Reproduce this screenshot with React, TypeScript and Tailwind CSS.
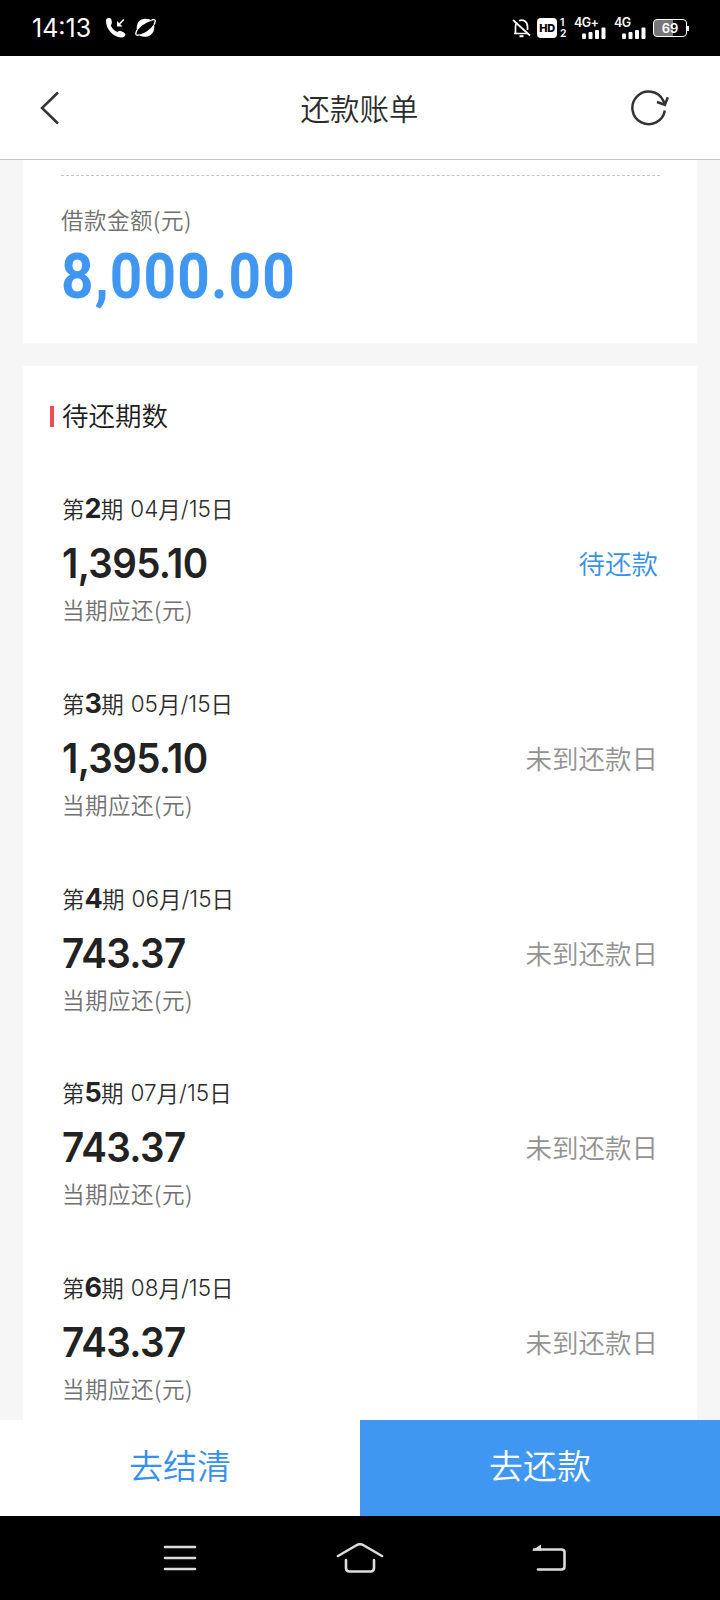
const CJK = "font-['Noto_Sans_CJK_SC',sans-serif]";

const periods = [
  { no: '2', date: ['04', '15'], amount: '1,395.10', status: '待还款', due: true },
  { no: '3', date: ['05', '15'], amount: '1,395.10', status: '未到还款日', due: false },
  { no: '4', date: ['06', '15'], amount: '743.37', status: '未到还款日', due: false },
  { no: '5', date: ['07', '15'], amount: '743.37', status: '未到还款日', due: false },
  { no: '6', date: ['08', '15'], amount: '743.37', status: '未到还款日', due: false },
];

function SignalBars() {
  return (
    <svg width="24" height="12" viewBox="0 0 24 12" fill="#fff">
      <rect x="0" y="6.5" width="4" height="5.5" rx="1" />
      <rect x="6.5" y="5" width="4" height="7" rx="1" />
      <rect x="13" y="3" width="4" height="9" rx="1" />
      <rect x="19.5" y="0.5" width="4" height="11.5" rx="1" />
    </svg>
  );
}

function StatusBar() {
  return (
    <div className="flex h-14 shrink-0 items-center bg-black pl-8 pr-[31px] font-['Inter',sans-serif] text-white">
      <span className="w-[60px] whitespace-nowrap text-[25px] leading-none">14:13</span>
      <svg className="ml-[13px]" width="22" height="22" viewBox="0 0 22 22" fill="none">
        <path
          d="M1 4C1 1.5 2.500 .5 4.500 1C6.500 1.500 7.500 5 6.500 7L5.800 8.500C7 11.500 9.500 14.200 12.500 15L14 14C16 13.500 20 15.500 20.500 17.500C20.500 19 18.500 20.800 16 20.500C8 20 1 12 1 4Z"
          fill="#fff"
        />
        <path d="M18.800 2.500L14 7.500" stroke="#fff" strokeWidth="1.6" />
        <path d="M12 4V9.500H17.500Z" fill="#fff" />
      </svg>
      <svg className="ml-2" width="22" height="20" viewBox="0 0 22 20">
        <path d="M2 13C.5 5 5 .8 10.500 .8C13 .8 15.500 1.500 17.500 3C12 3.500 6 7.500 2 13Z" fill="#fff" />
        <path d="M3.500 16.800C9 16 15.500 11.500 19 6C20.500 13 16.500 18.800 10.500 18.800C8 18.800 5.500 18.300 3.500 16.800Z" fill="#fff" />
        <path
          d="M16.500 2.200C18.500 1.200 20.500 1.300 20.200 3.300C20 4.500 19.700 5.500 19 6.500M2 12C1 14 .6 15.500 1 16.500C1.500 17.500 3 17.300 4.500 16.600"
          fill="none"
          stroke="#fff"
          strokeWidth="1.4"
        />
      </svg>

      <div className="ml-auto flex items-center">
        <svg width="20" height="20" viewBox="0 0 20 20" fill="none" stroke="#fff" strokeWidth="1.700">
          <path d="M2 15.500H15M3.500 15V8.500C3.500 7 4 5.500 5 4.500M7 2.800C11 .8 15.500 3.500 15.500 8.500V12" />
          <path d="M1 2L18 17.500" />
          <path d="M7.500 18.200H11.500" strokeWidth="2" />
        </svg>
        <span className="ml-[5px] flex h-5 w-5 items-center justify-center rounded-[4px] bg-white text-[11px] font-extrabold leading-none tracking-[-0.4px] text-black">
          HD
        </span>
        <span className="ml-[3px] flex w-[7px] flex-col text-[10.500px] font-semibold leading-[11px]">
          <span>1</span>
          <span>2</span>
        </span>
        <div className="ml-[7px] flex h-5 w-8 flex-col">
          <span className="h-[9px] text-[12.500px] font-semibold leading-[9px] tracking-[-0.6px]">4G+</span>
          <span className="self-end"><SignalBars /></span>
        </div>
        <div className="ml-2 flex h-5 w-8 flex-col">
          <span className="h-[9px] text-[12.500px] font-semibold leading-[9px] tracking-[-0.6px]">4G</span>
          <span className="self-end"><SignalBars /></span>
        </div>
        <div className="ml-[7px] flex items-center">
          <span className="flex h-[18px] w-[34px] items-center justify-center rounded-[4px] border-[1.500px] border-white bg-linear-to-r from-[#777] from-60% to-black to-60% text-[13px] font-semibold leading-none">
            69
          </span>
          <span className="h-[5px] w-0.5 bg-white" />
        </div>
      </div>
    </div>
  );
}

function Header() {
  return (
    <header className="flex h-[104px] shrink-0 items-center justify-between border-b border-[#c8c8c8] bg-white pl-10 pr-[50px]">
      <svg width="20" height="34" viewBox="0 0 20 34" fill="none" stroke="#333" strokeWidth="2.500">
        <path d="M18 1.500L2 17L18 32.500" />
      </svg>
      <h1 className="ml-[29px] text-[29.500px] font-[350] leading-none text-[#2b2b2b]">还款账单</h1>
      <svg width="40" height="38" viewBox="0 0 40 38" fill="none" stroke="#333" strokeWidth="2.500">
        <path d="M34.800 21.500A16.300 16.300 0 1 1 33.200 11.500L34.800 15.500" />
        <path d="M27 13L34.900 15.800L37.800 8.300" />
      </svg>
    </header>
  );
}

function PeriodRow({ period }: { period: (typeof periods)[number] }) {
  return (
    <li className="flex h-[194.800px] items-start justify-between pl-[39px] pr-[39px]">
      <div>
        <p className="flex h-[30px] items-center whitespace-pre text-[22.500px] font-[350] leading-[30px] text-[#2b2b2b]">
          <span className="-mt-0.5">第</span>
          <b className="font-['Inter',sans-serif] text-[27px] font-bold tracking-[-0.8px] text-[#222]">{period.no}</b>
          <span className="-mt-0.5">期</span>
          <span className="ml-[7px] font-['Inter',sans-serif]">{period.date[0]}</span>
          <span className="-mt-0.5">月</span>
          <span className="font-['Inter',sans-serif]">/{period.date[1]}</span>
          <span className="-mt-0.5">日</span>
        </p>
        <p className="mt-[15px] h-[48px] origin-left scale-x-[0.94] font-['Inter',sans-serif] text-[41px] font-semibold leading-[48px] tracking-[-0.7px] text-[#222]">
          {period.amount}
        </p>
        <p className="mt-[7px] text-[22.500px] font-[350] leading-[30px] tracking-[0.5px] text-[#707070]">当期应还(元)</p>
      </div>
      <span
        className={`mt-[54px] text-[26.500px] font-[350] leading-[30px] ${period.due ? 'text-[#3a90e6]' : 'text-[#929292]'}`}
      >
        {period.status}
      </span>
    </li>
  );
}

export default function App() {
  return (
    <div className={`flex h-[1600px] w-[720px] flex-col overflow-hidden bg-[#f6f6f6] ${CJK}`}>
      <StatusBar />
      <Header />

      <main className="min-h-0 flex-1 overflow-hidden pl-[23px] pr-[23px]">
        <section className="h-[183px] bg-white pl-[38px] pr-[37px] pt-[15px]">
          <div className="border-t border-dashed border-[#c4c4c4]" />
          <p className="mt-[28px] text-[22.500px] font-[350] leading-[30px] tracking-[0.5px] text-[#707070]">借款金额(元)</p>
          <p className="mt-[11px] origin-left scale-x-90 font-['Roboto',sans-serif] text-[63px] font-bold leading-[64px] tracking-[1.300px] text-[#3f97f2]">
            8,000.00
          </p>
        </section>

        <section className="mt-[23px] h-[1100px] bg-white pt-[35px]">
          <h2 className="flex h-[30px] items-center pl-[27px] text-[26.500px] font-[350] leading-[30px] text-[#1c1c1c]">
            <span className="mr-[8px] h-[21px] w-1 bg-[#f04a55]" />
            <span className="-mt-0.5">待还期数</span>
          </h2>
          <ul className="pt-[63px]">
            {periods.map((period) => (
              <PeriodRow key={period.no} period={period} />
            ))}
          </ul>
        </section>
      </main>

      <footer className="flex h-24 shrink-0 text-[34px] font-[350]">
        <button className="flex-1 bg-white pb-2 text-[#3890ee]">去结清</button>
        <button className="flex-1 bg-[#3f97f2] pb-2 text-white">去还款</button>
      </footer>

      <nav className="flex h-[84px] shrink-0 items-center justify-between bg-black pl-[163px] pr-[153px]">
        <svg width="34" height="28" viewBox="0 0 34 28" stroke="#ddd" strokeWidth="2.600" strokeLinecap="round">
          <path d="M2 3H32M2 14H32M2 25H32" />
        </svg>
        <svg className="-ml-[9px]" width="48" height="32" viewBox="0 0 48 32" fill="none" stroke="#ddd" strokeWidth="2.600" strokeLinecap="round">
          <path d="M2 14L20 3.500Q24 1 28 3.500L46 14M10 18V26Q10 29.500 13.500 29.500H34.500Q38 29.500 38 26V18" />
        </svg>
        <svg width="36" height="28" viewBox="0 0 36 28" fill="none" stroke="#ddd" strokeWidth="2.600" strokeLinecap="round">
          <path d="M3 5.500H30.500Q33.500 5.500 33.500 8.500V22.500Q33.500 25.500 30.500 25.500H7" />
          <path d="M1 6.500L10 .5V6.500Z" fill="#ddd" stroke="none" />
        </svg>
      </nav>
    </div>
  );
}
